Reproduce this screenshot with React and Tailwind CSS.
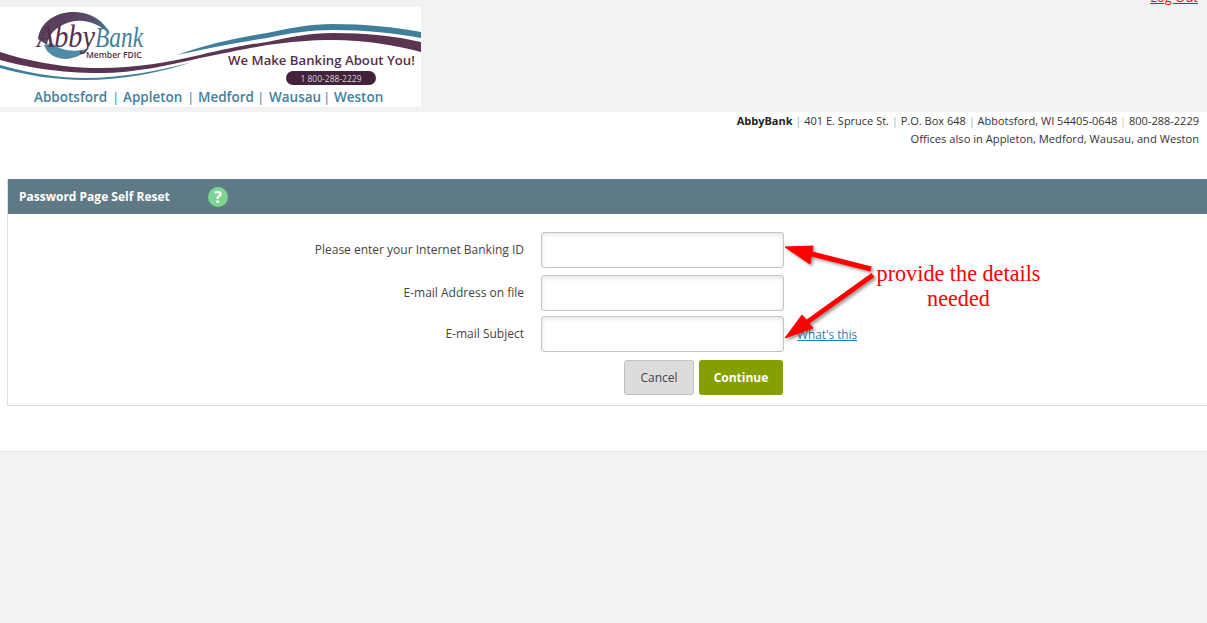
import React from "react";

function Logo() {
  return (
    <svg width="421" height="100" viewBox="0 0 421 100" className="block bg-white">
      <defs>
        <linearGradient id="ring" x1="0" y1="0" x2="1" y2="0.6">
          <stop offset="0" stopColor="#5a3450" />
          <stop offset="0.6" stopColor="#5a4a68" />
          <stop offset="1" stopColor="#3f7f9c" />
        </linearGradient>
      </defs>
      <path d="M38 32 C40 14 58 4 76 5 C92 6 104 14 110 27 C98 16 84 11 70 15 C56 19 48 28 47 38 Z" fill="url(#ring)" />
      <path d="M44 38 C48 50 62 54 72 51 C80 49 86 45 89 41 C76 46 60 44 52 36 Z" fill="#4f8aa6" />
      <text x="37" y="40" fontFamily="'Liberation Serif', serif" fontStyle="italic" fontSize="31" fill="#553049" textLength="58" lengthAdjust="spacingAndGlyphs">Abby</text>
      <text x="95" y="40" fontFamily="'Liberation Serif', serif" fontStyle="italic" fontSize="30" fill="#3f7f9c" textLength="48" lengthAdjust="spacingAndGlyphs">Bank</text>
      <text x="86" y="51" fontFamily="'Open Sans', sans-serif" fontWeight="600" fontSize="8.5" fill="#553049">Member FDIC</text>
      <path d="M0 45 C25 53 60 61 100 61 C135 61 170 55 200 48 C225 42 245 38 267 35 C290 30 310 26 333 26 C365 26 395 29 421 35 L421 45 C395 38 365 33 333 33 C310 33 290 35 267 38 C245 42 225 46 200 51 C170 58 135 66 100 66 C60 66 25 60 0 53 Z" fill="#5a3450" />
      <path d="M0 58 C25 65 55 71 85 71 C120 71 160 64 192 55 C160 66 120 73 85 73 C55 73 25 68 0 61 Z" fill="#3f7f9c" />
      <path d="M177 48 C205 38 235 31 267 26 C290 21 310 17 333 17 C365 17 395 20 421 25 L421 31 C395 26 365 23 333 23 C310 23 290 26 267 31 C235 36 205 42 177 48 Z" fill="#3f7f9c" />
      <text x="228" y="58" fontFamily="'Open Sans', sans-serif" fontWeight="600" fontSize="13.2" fill="#553049">We Make Banking About You!</text>
      <rect x="286" y="64" width="90" height="14" rx="7" fill="#43233b" />
      <text x="331" y="75" textAnchor="middle" fontFamily="'Open Sans', sans-serif" fontSize="8.5" fill="#d9d2d7">1 800-288-2229</text>
      <text x="34" y="95" fontFamily="'Open Sans', sans-serif" fontWeight="600" fontSize="13.5" fill="#44809b">Abbotsford</text>
      <text x="112" y="95" fontFamily="'Open Sans', sans-serif" fontSize="13.5" fill="#44809b">|</text>
      <text x="123" y="95" fontFamily="'Open Sans', sans-serif" fontWeight="600" fontSize="13.5" fill="#44809b">Appleton</text>
      <text x="187" y="95" fontFamily="'Open Sans', sans-serif" fontSize="13.5" fill="#44809b">|</text>
      <text x="198" y="95" fontFamily="'Open Sans', sans-serif" fontWeight="600" fontSize="13.5" fill="#44809b">Medford</text>
      <text x="257" y="95" fontFamily="'Open Sans', sans-serif" fontSize="13.5" fill="#44809b">|</text>
      <text x="269" y="95" fontFamily="'Open Sans', sans-serif" fontWeight="600" fontSize="13.5" fill="#44809b">Wausau</text>
      <text x="323" y="95" fontFamily="'Open Sans', sans-serif" fontSize="13.5" fill="#44809b">|</text>
      <text x="334" y="95" fontFamily="'Open Sans', sans-serif" fontWeight="600" fontSize="13.5" fill="#44809b">Weston</text>
    </svg>
  );
}

function Arrows() {
  return (
    <svg width="1207" height="623" className="absolute left-0 top-0 pointer-events-none">
      <defs>
        <filter id="arrowShadow" x="-20%" y="-20%" width="140%" height="140%">
          <feDropShadow dx="2" dy="2" stdDeviation="1.5" floodColor="#000" floodOpacity="0.4" />
        </filter>
      </defs>
      <g fill="#ff0000" stroke="#ff0000" filter="url(#arrowShadow)">
        <path d="M871 269 L808 253" strokeWidth="5" />
        <path d="M785 247 L813 246 L810 264 Z" strokeWidth="1" />
        <path d="M873 275 L806 323" strokeWidth="5" />
        <path d="M785 338 L802 315 L813 328 Z" strokeWidth="1" />
      </g>
    </svg>
  );
}

function Field({ label, className, children }) {
  return (
    <div className={"flex items-center " + className}>
      <label className="w-[516px] text-right text-xs text-[#444]">{label}</label>
      <input className="ml-[17px] w-[243px] h-[36px] bg-white border border-[#c4c4c4] rounded-[3px] shadow-[inset_0_2px_5px_rgba(0,0,0,0.1)]" />
      {children}
    </div>
  );
}

export default function App() {
  return (
    <div className="relative h-[623px] overflow-hidden bg-[#f1f2f4] font-['Open_Sans',sans-serif]">
      <div className="h-[112px] flow-root">
        <div className="flex justify-end pr-[9px] -mt-[11px] h-[18px] leading-[16px]">
          <a href="#" className="text-[13px] text-[#ff0000] underline">Log Out</a>
        </div>
        <Logo />
      </div>

      <div className="h-[340px] bg-white border-b border-[#e2e3e5]">
        <div className="pr-[8px] text-right leading-[18px] text-[#333]">
          <div className="text-[11px]">
            <b className="font-bold text-[#222]">AbbyBank</b>
            <span className="text-[#8fb8d8]"> | </span>401 E. Spruce St.
            <span className="text-[#8fb8d8]"> | </span>P.O. Box 648
            <span className="text-[#8fb8d8]"> | </span>Abbotsford, WI 54405-0648
            <span className="text-[#e8b98a]"> | </span>800-288-2229
          </div>
          <div className="text-[11.15px]">Offices also in Appleton, Medford, Wausau, and Weston</div>
        </div>

        <div className="ml-[7px] mt-[31px] h-[227px] border border-[#dcdedf] border-r-0">
          <div className="flex items-center h-[35px] -mt-px bg-[#5f7a87] pl-[11px]">
            <span className="w-[189px] text-xs font-bold text-white">Password Page Self Reset</span>
            <span className="flex items-center justify-center w-[20px] h-[20px] rounded-full bg-[#7fd494] text-white text-base font-bold">?</span>
          </div>
          <Field label="Please enter your Internet Banking ID" className="mt-[18px]" />
          <Field label="E-mail Address on file" className="mt-[7px]" />
          <Field label="E-mail Subject" className="mt-[5px]">
            <a href="#" className="ml-[13px] mt-[2px] text-[11.8px] text-[#1f7fb0] underline">What's this</a>
          </Field>
          <div className="flex mt-[8px] ml-[616px] gap-[5px]">
            <button className="w-[70px] h-[35px] bg-[#dcdcdc] border border-[#c0c0c0] rounded-[3px] text-xs text-[#444]">Cancel</button>
            <button className="w-[84px] h-[35px] bg-[#859f00] rounded-[3px] text-xs font-bold text-white">Continue</button>
          </div>
        </div>
      </div>

      <Arrows />
      <div className="absolute left-[858px] top-[261px] w-[201px] text-center font-['Liberation_Serif',serif] text-[22.2px] leading-[25px] text-[#ff0000]">
        provide the details needed
      </div>
    </div>
  );
}
